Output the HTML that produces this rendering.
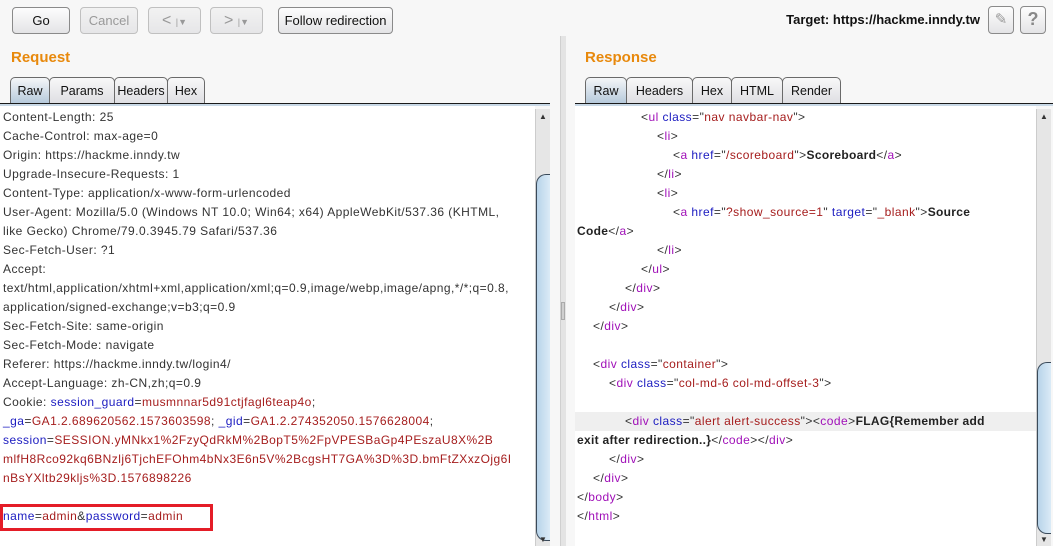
<!DOCTYPE html>
<html><head><meta charset="utf-8"><style>
*{margin:0;padding:0;box-sizing:border-box}
body{width:1053px;height:546px;background:#f7f7f7;font-family:"Liberation Sans",Arial,sans-serif;font-size:12px;color:#222;position:relative;overflow:hidden}
.btn{position:absolute;top:7px;height:27px;border:1px solid #8a8a8a;border-radius:4px;background:linear-gradient(#fdfdfd,#e4e4e6);font-size:13px;text-align:center;line-height:25px;color:#111}
.dis{color:#999;border-color:#c0c0c0;background:linear-gradient(#f2f2f2,#e6e6e8)}
.h{position:absolute;top:49px;font-size:15px;font-weight:bold;color:#e8890c}
.tab{position:absolute;top:77px;height:27px;border:1px solid #6a6a6a;border-bottom:none;border-radius:5px 5px 0 0;background:linear-gradient(#f8f8f8,#dedee2);font-size:12.5px;text-align:center;line-height:26px;color:#111}
.tab.sel{background:linear-gradient(#f4f6f8,#b4c8da)}
.tl{position:absolute;top:103px;height:3px;border-top:1px solid #1a1a1a;background:#c8d8e6}
.pane{position:absolute;top:106px;height:440px;background:#fff}
.ln{position:absolute;height:19px;line-height:19px;white-space:pre;font-size:12px;letter-spacing:0.45px;color:#333}
.k{color:#1b1bc0}.v{color:#a51d1d}.t{color:#a010b8}.b{font-weight:bold;color:#222;letter-spacing:0.3px}
.sb{position:absolute;top:109px;width:15px;height:437px;background:#e6e6e6;border-left:1px solid #ccc;overflow:hidden}
.thumb{position:absolute;left:0;width:16px;border:1px solid #3a4a5a;border-right:none;border-radius:10px 0 0 10px;background:linear-gradient(90deg,#b8d4ea,#e0eef8)}
.arr{position:absolute;left:3px;font-size:8px;color:#333}
</style></head><body>
<div class="btn" style="left:12px;width:58px">Go</div>
<div class="btn dis" style="left:80px;width:58px">Cancel</div>
<div class="btn dis" style="left:148px;width:53px;font-size:16px">&lt; <span style="font-size:9px">|▼</span></div>
<div class="btn dis" style="left:210px;width:53px;font-size:16px">&gt; <span style="font-size:9px">|▼</span></div>
<div class="btn" style="left:278px;width:115px">Follow redirection</div>
<div style="position:absolute;top:12px;left:780px;width:200px;text-align:right;font-size:13px;font-weight:bold;color:#111">Target: https://hackme.inndy.tw</div>
<div class="btn" style="left:988px;width:26px;top:6px;height:28px;color:#999;font-size:15px">✎</div>
<div class="btn" style="left:1020px;width:26px;top:6px;height:28px;color:#888;font-size:18px;font-weight:bold">?</div>

<div class="h" style="left:11px">Request</div>
<div class="h" style="left:585px">Response</div>

<div class="tab sel" style="left:10px;width:40px">Raw</div>
<div class="tab" style="left:49px;width:66px">Params</div>
<div class="tab" style="left:114px;width:54px">Headers</div>
<div class="tab" style="left:167px;width:38px">Hex</div>
<div class="tl" style="left:0;width:550px"></div>

<div class="tab sel" style="left:585px;width:42px">Raw</div>
<div class="tab" style="left:626px;width:67px">Headers</div>
<div class="tab" style="left:692px;width:40px">Hex</div>
<div class="tab" style="left:731px;width:52px">HTML</div>
<div class="tab" style="left:782px;width:59px">Render</div>
<div class="tl" style="left:575px;width:478px"></div>

<div class="pane" style="left:0;width:535px"></div>
<div class="pane" style="left:575px;width:461px"></div>

<div style="position:absolute;left:560px;top:36px;width:6px;height:510px;background:#e4e4e4;border-left:1px solid #d0d0d0"></div>
<div style="position:absolute;left:561px;top:302px;width:4px;height:18px;background:#cfcfcf;border:1px solid #aaa"></div>

<div class="sb" style="left:535px"><span class="arr" style="top:3px">▲</span><div class="thumb" style="top:65px;height:367px"></div><span class="arr" style="top:426px">▼</span></div>
<div class="sb" style="left:1036px"><span class="arr" style="top:3px">▲</span><div class="thumb" style="top:253px;height:172px"></div><span class="arr" style="top:426px">▼</span></div>

<div style="position:absolute;left:575px;top:412px;width:461px;height:19px;background:#efefef"></div>

<!-- request -->
<div class="ln" style="left:3px;top:108px">Content-Length: 25</div>
<div class="ln" style="left:3px;top:127px">Cache-Control: max-age=0</div>
<div class="ln" style="left:3px;top:146px">Origin: https://hackme.inndy.tw</div>
<div class="ln" style="left:3px;top:165px">Upgrade-Insecure-Requests: 1</div>
<div class="ln" style="left:3px;top:184px">Content-Type: application/x-www-form-urlencoded</div>
<div class="ln" style="left:3px;top:203px">User-Agent: Mozilla/5.0 (Windows NT 10.0; Win64; x64) AppleWebKit/537.36 (KHTML,</div>
<div class="ln" style="left:3px;top:222px">like Gecko) Chrome/79.0.3945.79 Safari/537.36</div>
<div class="ln" style="left:3px;top:241px">Sec-Fetch-User: ?1</div>
<div class="ln" style="left:3px;top:260px">Accept:</div>
<div class="ln" style="left:3px;top:279px">text/html,application/xhtml+xml,application/xml;q=0.9,image/webp,image/apng,*/*;q=0.8,</div>
<div class="ln" style="left:3px;top:298px">application/signed-exchange;v=b3;q=0.9</div>
<div class="ln" style="left:3px;top:317px">Sec-Fetch-Site: same-origin</div>
<div class="ln" style="left:3px;top:336px">Sec-Fetch-Mode: navigate</div>
<div class="ln" style="left:3px;top:355px">Referer: https://hackme.inndy.tw/login4/</div>
<div class="ln" style="left:3px;top:374px">Accept-Language: zh-CN,zh;q=0.9</div>
<div class="ln" style="left:3px;top:393px">Cookie: <span class="k">session_guard</span>=<span class="v">musmnnar5d91ctjfagl6teap4o</span>;</div>
<div class="ln" style="left:3px;top:412px"><span class="k">_ga</span>=<span class="v">GA1.2.689620562.1573603598</span>; <span class="k">_gid</span>=<span class="v">GA1.2.274352050.1576628004</span>;</div>
<div class="ln" style="left:3px;top:431px"><span class="k">session</span>=<span class="v">SESSION.yMNkx1%2FzyQdRkM%2BopT5%2FpVPESBaGp4PEszaU8X%2B</span></div>
<div class="ln" style="left:3px;top:450px"><span class="v">mlfH8Rco92kq6BNzlj6TjchEFOhm4bNx3E6n5V%2BcgsHT7GA%3D%3D.bmFtZXxzOjg6I</span></div>
<div class="ln" style="left:3px;top:469px"><span class="v">nBsYXltb29kljs%3D.1576898226</span></div>
<div class="ln" style="left:3px;top:507px"><span class="k">name</span>=<span class="v">admin</span>&amp;<span class="k">password</span>=<span class="v">admin</span></div>
<div style="position:absolute;left:0;top:504px;width:213px;height:27px;border:3px solid #e41d27"></div>

<!-- response -->
<div class="ln" style="left:641px;top:108px">&lt;<span class="t">ul</span> <span class="k">class</span>="<span class="v">nav navbar-nav</span>"&gt;</div>
<div class="ln" style="left:657px;top:127px">&lt;<span class="t">li</span>&gt;</div>
<div class="ln" style="left:673px;top:146px">&lt;<span class="t">a</span> <span class="k">href</span>="<span class="v">/scoreboard</span>"&gt;<span class="b">Scoreboard</span>&lt;/<span class="t">a</span>&gt;</div>
<div class="ln" style="left:657px;top:165px">&lt;/<span class="t">li</span>&gt;</div>
<div class="ln" style="left:657px;top:184px">&lt;<span class="t">li</span>&gt;</div>
<div class="ln" style="left:673px;top:203px">&lt;<span class="t">a</span> <span class="k">href</span>="<span class="v">?show_source=1</span>" <span class="k">target</span>="<span class="v">_blank</span>"&gt;<span class="b">Source</span></div>
<div class="ln" style="left:577px;top:222px"><span class="b">Code</span>&lt;/<span class="t">a</span>&gt;</div>
<div class="ln" style="left:657px;top:241px">&lt;/<span class="t">li</span>&gt;</div>
<div class="ln" style="left:641px;top:260px">&lt;/<span class="t">ul</span>&gt;</div>
<div class="ln" style="left:625px;top:279px">&lt;/<span class="t">div</span>&gt;</div>
<div class="ln" style="left:609px;top:298px">&lt;/<span class="t">div</span>&gt;</div>
<div class="ln" style="left:593px;top:317px">&lt;/<span class="t">div</span>&gt;</div>
<div class="ln" style="left:593px;top:355px">&lt;<span class="t">div</span> <span class="k">class</span>="<span class="v">container</span>"&gt;</div>
<div class="ln" style="left:609px;top:374px">&lt;<span class="t">div</span> <span class="k">class</span>="<span class="v">col-md-6 col-md-offset-3</span>"&gt;</div>
<div class="ln" style="left:625px;top:412px">&lt;<span class="t">div</span> <span class="k">class</span>="<span class="v">alert alert-success</span>"&gt;&lt;<span class="t">code</span>&gt;<span class="b">FLAG{Remember add</span></div>
<div class="ln" style="left:577px;top:431px"><span class="b">exit after redirection..}</span>&lt;/<span class="t">code</span>&gt;&lt;/<span class="t">div</span>&gt;</div>
<div class="ln" style="left:609px;top:450px">&lt;/<span class="t">div</span>&gt;</div>
<div class="ln" style="left:593px;top:469px">&lt;/<span class="t">div</span>&gt;</div>
<div class="ln" style="left:577px;top:488px">&lt;/<span class="t">body</span>&gt;</div>
<div class="ln" style="left:577px;top:507px">&lt;/<span class="t">html</span>&gt;</div>
</body></html>
